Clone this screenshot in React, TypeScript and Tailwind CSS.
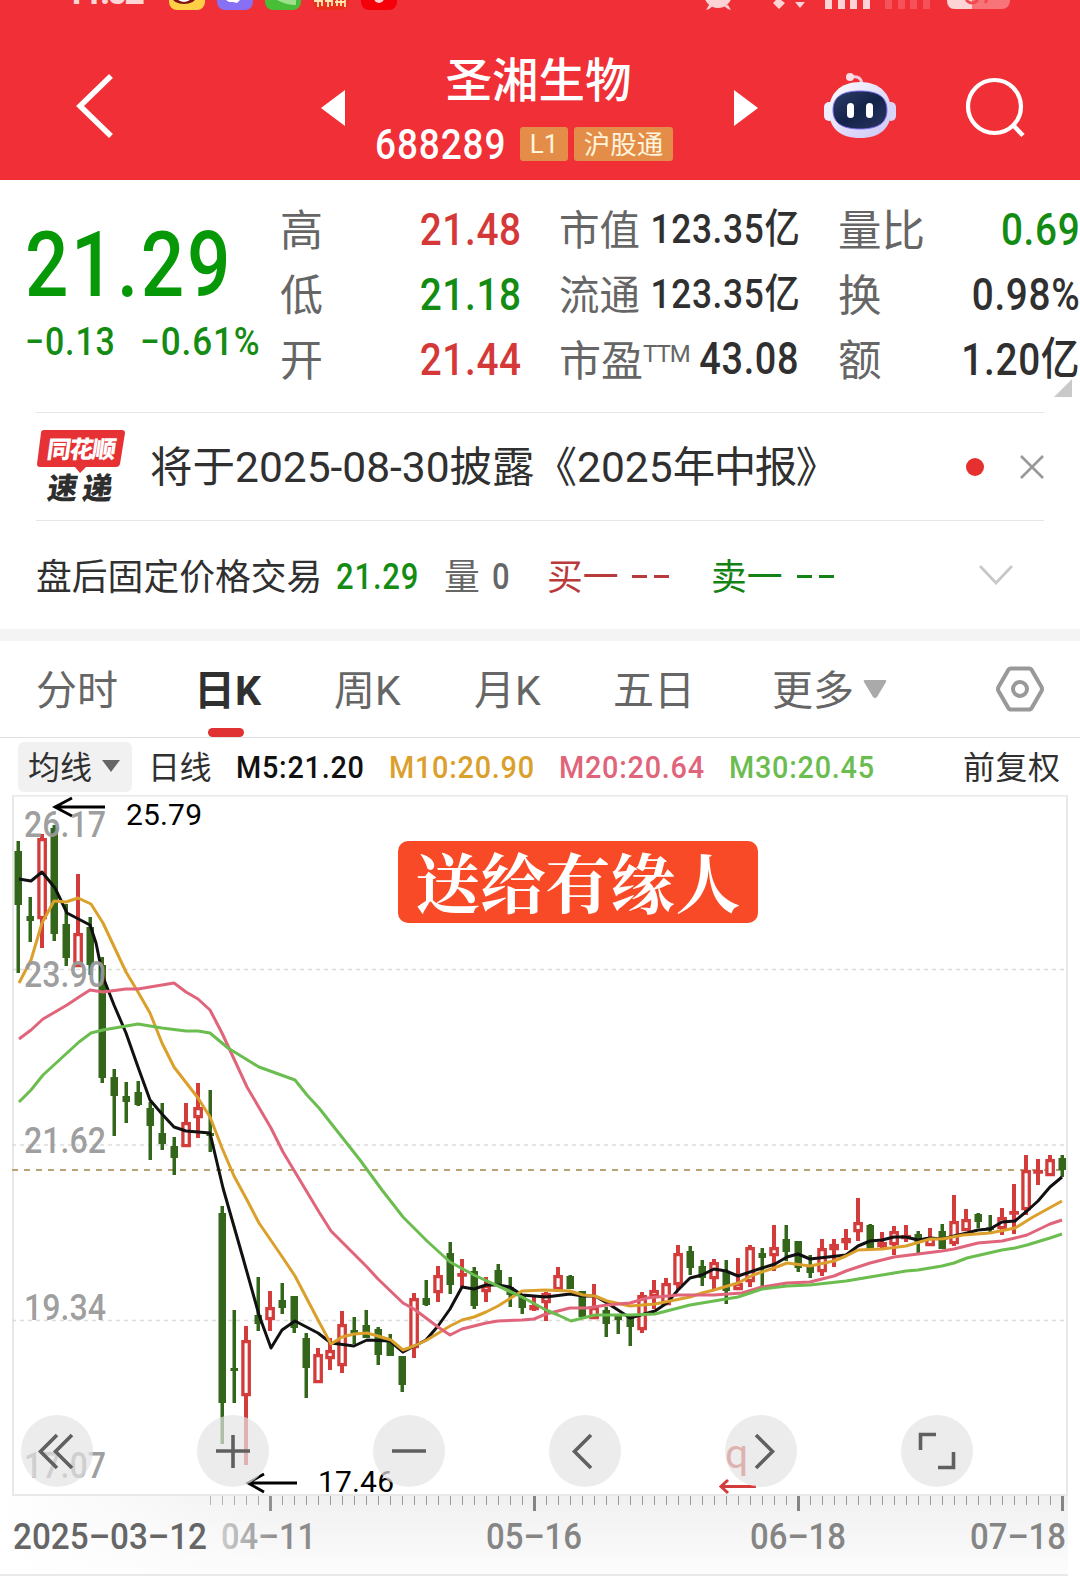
import { useState } from 'react';
import type { ReactNode } from 'react';

const UP = '#d43c3c';
const DOWN = '#33661a';

// [direction, high, body top, body bottom, low]
type Candle = ['u' | 'd', number, number, number, number];

const CANDLES: Candle[] = [
  ['d', 841, 851, 905, 973],
  ['d', 897, 916, 921, 942],
  ['u', 834, 838, 919, 948],
  ['d', 825, 828, 934, 941],
  ['d', 904, 924, 958, 966],
  ['u', 874, 933, 967, 967],
  ['d', 917, 927, 965, 975],
  ['d', 957, 965, 1078, 1083],
  ['d', 1069, 1077, 1096, 1136],
  ['d', 1082, 1096, 1102, 1123],
  ['d', 1081, 1092, 1105, 1106],
  ['d', 1102, 1108, 1126, 1160],
  ['d', 1103, 1133, 1144, 1150],
  ['d', 1137, 1146, 1158, 1175],
  ['u', 1103, 1122, 1147, 1147],
  ['u', 1083, 1107, 1118, 1138],
  ['d', 1090, 1133, 1136, 1152],
  ['d', 1206, 1213, 1403, 1444],
  ['d', 1310, 1368, 1371, 1403],
  ['u', 1326, 1340, 1396, 1465],
  ['d', 1277, 1315, 1324, 1331],
  ['u', 1291, 1307, 1320, 1331],
  ['d', 1283, 1300, 1308, 1314],
  ['d', 1296, 1296, 1328, 1333],
  ['d', 1333, 1338, 1368, 1398],
  ['u', 1348, 1354, 1383, 1383],
  ['u', 1338, 1350, 1359, 1370],
  ['u', 1311, 1324, 1366, 1373],
  ['d', 1317, 1330, 1333, 1344],
  ['d', 1310, 1325, 1338, 1338],
  ['d', 1327, 1329, 1355, 1365],
  ['d', 1334, 1342, 1356, 1356],
  ['d', 1356, 1356, 1385, 1392],
  ['u', 1293, 1298, 1348, 1358],
  ['d', 1280, 1298, 1305, 1306],
  ['u', 1266, 1275, 1293, 1302],
  ['d', 1242, 1253, 1285, 1294],
  ['u', 1259, 1273, 1276, 1287],
  ['d', 1267, 1271, 1306, 1309],
  ['u', 1277, 1285, 1292, 1302],
  ['d', 1264, 1270, 1286, 1286],
  ['d', 1277, 1287, 1295, 1307],
  ['d', 1294, 1296, 1308, 1314],
  ['u', 1296, 1305, 1310, 1311],
  ['u', 1292, 1293, 1303, 1321],
  ['u', 1267, 1275, 1290, 1292],
  ['d', 1275, 1276, 1289, 1289],
  ['d', 1291, 1291, 1317, 1317],
  ['u', 1284, 1307, 1319, 1319],
  ['d', 1307, 1310, 1324, 1337],
  ['d', 1314, 1316, 1320, 1334],
  ['d', 1315, 1317, 1327, 1346],
  ['u', 1292, 1295, 1330, 1333],
  ['u', 1280, 1290, 1297, 1309],
  ['u', 1278, 1283, 1305, 1305],
  ['u', 1245, 1253, 1285, 1290],
  ['d', 1246, 1251, 1268, 1275],
  ['d', 1260, 1266, 1278, 1286],
  ['u', 1259, 1262, 1279, 1289],
  ['d', 1260, 1271, 1291, 1304],
  ['u', 1258, 1283, 1290, 1290],
  ['u', 1245, 1247, 1282, 1287],
  ['d', 1248, 1253, 1258, 1287],
  ['u', 1225, 1247, 1256, 1271],
  ['d', 1225, 1239, 1252, 1261],
  ['d', 1241, 1241, 1268, 1272],
  ['d', 1255, 1266, 1273, 1278],
  ['u', 1239, 1248, 1272, 1276],
  ['u', 1239, 1244, 1250, 1267],
  ['u', 1229, 1238, 1243, 1250],
  ['u', 1198, 1222, 1232, 1241],
  ['d', 1224, 1225, 1249, 1249],
  ['u', 1232, 1242, 1247, 1248],
  ['u', 1226, 1231, 1245, 1255],
  ['u', 1225, 1235, 1239, 1242],
  ['d', 1231, 1234, 1242, 1253],
  ['u', 1228, 1237, 1246, 1246],
  ['d', 1224, 1231, 1249, 1249],
  ['u', 1195, 1221, 1244, 1246],
  ['u', 1209, 1219, 1231, 1231],
  ['d', 1213, 1214, 1222, 1228],
  ['d', 1215, 1227, 1230, 1232],
  ['u', 1208, 1217, 1229, 1235],
  ['u', 1184, 1211, 1214, 1234],
  ['u', 1155, 1170, 1210, 1215],
  ['u', 1159, 1170, 1173, 1185],
  ['u', 1155, 1159, 1176, 1176],
  ['d', 1155, 1158, 1170, 1177],
];

const MA_LINES = [
  {
    color: '#111111',
    points:
      '19,879 31,881 42,872 55,888 67,913 90,925 96,943 103,977 114,1005 126,1033 138,1067 150,1100 162,1114 174,1127 186,1131 210,1133 223,1188 243,1258 259,1315 271,1348 282,1330 295,1321 318,1333 331,1343 354,1346 367,1340 390,1341 403,1352 426,1340 438,1326 450,1309 462,1287 474,1289 486,1285 498,1285 510,1287 522,1295 546,1297 570,1294 583,1296 595,1296 607,1303 618,1310 630,1318 655,1311 667,1303 678,1290 690,1278 702,1275 714,1269 726,1271 738,1276 762,1268 775,1264 787,1257 798,1254 810,1259 846,1255 858,1246 870,1241 882,1240 894,1237 906,1237 918,1240 930,1238 942,1239 954,1236 967,1233 978,1230 990,1229 1002,1222 1015,1221 1027,1211 1038,1201 1050,1187 1062,1177',
  },
  {
    color: '#dba02c',
    points:
      '19,983 31,960 42,923 54,901 66,902 78,898 91,904 103,923 126,972 138,992 150,1013 162,1043 174,1067 198,1098 210,1117 222,1148 234,1176 247,1200 259,1223 283,1258 295,1276 318,1320 331,1344 342,1337 354,1334 367,1333 378,1336 391,1340 403,1350 414,1346 427,1340 450,1326 462,1320 474,1317 486,1312 498,1306 522,1291 545,1290 570,1291 583,1295 595,1296 607,1301 630,1306 655,1304 690,1297 702,1293 714,1290 738,1283 753,1275 774,1268 787,1263 810,1266 834,1261 846,1256 858,1250 882,1249 906,1246 930,1239 942,1239 963,1235 990,1233 1015,1228 1033,1217 1062,1201',
  },
  {
    color: '#e0647a',
    points:
      '19,1039 31,1030 43,1019 67,1005 79,997 90,990 103,992 126,989 138,989 174,983 186,992 198,999 210,1010 222,1033 247,1087 271,1128 283,1152 319,1212 331,1231 367,1267 378,1279 403,1303 414,1309 438,1327 450,1335 462,1329 486,1323 498,1321 522,1320 534,1319 546,1314 570,1308 587,1308 607,1305 630,1303 647,1298 678,1295 714,1295 742,1293 762,1287 787,1283 810,1282 834,1276 846,1271 870,1263 894,1257 918,1254 942,1251 954,1249 978,1243 1002,1241 1015,1238 1027,1235 1050,1224 1062,1220',
  },
  {
    color: '#6cbd50',
    points:
      '19,1102 31,1090 43,1075 67,1053 79,1042 91,1033 103,1030 138,1024 162,1028 186,1031 198,1031 210,1033 228,1048 259,1067 295,1080 307,1095 319,1108 360,1160 382,1190 403,1217 427,1241 450,1262 474,1275 522,1297 546,1310 558,1315 571,1321 595,1315 630,1315 655,1314 690,1305 714,1301 738,1297 762,1289 787,1286 810,1285 846,1281 906,1271 918,1270 942,1266 954,1263 967,1258 1002,1250 1015,1248 1027,1245 1050,1238 1062,1234',
  },
];

const PRICE_LABELS = [
  { text: '26.17', y: 837 },
  { text: '23.90', y: 987 },
  { text: '21.62', y: 1153 },
  { text: '19.34', y: 1320 },
  { text: '17.07', y: 1478 },
];

const DATES = [
  { text: '2025–03–12', x: 13, w: 194, fill: '#666666' },
  { text: '04–11', x: 221, w: 95, fill: 'url(#dateFade)' },
  { text: '05–16', x: 486, w: 96, fill: '#858585' },
  { text: '06–18', x: 750, w: 96, fill: '#858585' },
  { text: '07–18', x: 970, w: 96, fill: '#858585' },
];

const TICKS = Array.from({ length: 72 }, (_, i) => 210 + i * 12);

function StatusBar() {
  return (
    <svg width="1080" height="12" viewBox="0 0 1080 12" className="block">
      <text
        x="65"
        y="4"
        fontSize="36"
        fontWeight="700"
        fill="#fff"
        opacity="0.8"
        textLength="80"
      >
        11:02
      </text>
      <rect x="169" y="-26" width="36" height="36" rx="8" fill="#ffcf45" />
      <ellipse cx="184" cy="-3" rx="12" ry="7" fill="#7c1212" />
      <ellipse cx="184" cy="-3" rx="7" ry="5" fill="#fff" />
      <rect x="217" y="-26" width="36" height="36" rx="8" fill="#8870f5" />
      <path d="M226 0h8v2h-5zM232 0h8l-3 3-4-1z" fill="#fff" />
      <rect x="265" y="-26" width="36" height="36" rx="8" fill="#47bd38" />
      <path d="M277 0h19v5q-10 0-19-5z" fill="#9fe08f" />
      <rect x="313" y="-26" width="36" height="36" rx="8" fill="#e8301c" />
      <path
        d="M314 1h8M318 0v7M322 0v6M325 1h7M328 0v7M332 0v6M335 2h10M337 0v6M341 0v6M345 0v7"
        stroke="#ffe6b0"
        strokeWidth="1.800"
      />
      <rect x="361" y="-26" width="36" height="36" rx="8" fill="#f50008" />
      <circle cx="379" cy="-2" r="5" fill="#ffd0d0" />
      <g fill="#fdd3d6">
        <circle cx="718" cy="-6" r="14" />
        <path d="M709 5l-3 5 3-1 4-3zM728 5l3 5-3-1-4-3z" />
        <path d="M773 3l3-3h5l4 3-6 6zM795 2h10l-5 6z" />
        <path d="M825 0h7v9h-7zM838 0h7v9h-7zM850 0h7v9h-7zM863 0h7v9h-7z" />
      </g>
      <path
        d="M885 0h7v9h-7zM898 0h7v9h-7zM910 0h7v9h-7zM923 0h7v9h-7z"
        fill="#f5525a"
      />
      <rect x="947" y="-20" width="63" height="29" rx="8" fill="#f87478" />
      <path d="M947 0h25v9h-17q-8 0-8-9z" fill="#fdd3d6" />
      <path d="M966 0q6 6 12 0M985 3l2-3" stroke="#ee4a50" strokeWidth="3" fill="none" />
    </svg>
  );
}

function Robot() {
  return (
    <svg width="72" height="68" viewBox="0 0 72 68">
      <defs>
        <linearGradient id="shell" x1="0" y1="0" x2="1" y2="1">
          <stop offset="0" stopColor="#fff" />
          <stop offset="0.55" stopColor="#e0dcfa" />
          <stop offset="1" stopColor="#cdc6f4" />
        </linearGradient>
        <linearGradient id="visor" x1="0" y1="0" x2="1" y2="1">
          <stop offset="0" stopColor="#2e3d66" />
          <stop offset="0.5" stopColor="#14234a" />
          <stop offset="1" stopColor="#2b3560" />
        </linearGradient>
      </defs>
      <path d="M27 5q10-2 11 7" stroke="#f3c9da" strokeWidth="3" fill="none" />
      <circle cx="26" cy="5" r="4" fill="#fbdde6" />
      <rect x="0" y="30" width="10" height="19" rx="5" fill="#eef0ff" />
      <rect x="62" y="30" width="10" height="19" rx="5" fill="#d8d4f8" />
      <path
        d="M36 10C56 10 67 22 67 39S56 66 36 66 5 56 5 39 16 10 36 10z"
        fill="url(#shell)"
      />
      <path
        d="M36 19c18 0 27 6 27 19s-9 19-27 19S9 51 9 38s9-19 27-19z"
        fill="url(#visor)"
        stroke="#7a6ff0"
        strokeWidth="1"
      />
      <rect x="23" y="31" width="7" height="15" rx="3.500" fill="#fff" />
      <rect x="42" y="31" width="7" height="15" rx="3.500" fill="#fff" />
    </svg>
  );
}

function Header() {
  return (
    <header className="h-[180px] bg-[#f02f37] text-white">
      <StatusBar />
      <div className="flex h-[168px] items-start">
        <svg className="mt-[60px] ml-[75px] shrink-0" width="42" height="68" viewBox="0 0 42 68">
          <path d="M36 4 5 34 36 64" stroke="#fff" strokeWidth="5.500" fill="none" />
        </svg>
        <svg className="mt-[78px] ml-[204px] shrink-0" width="24" height="36" viewBox="0 0 24 36">
          <path d="M24 0v36L0 18z" fill="#fff" />
        </svg>
        <div className="ml-[30px] w-[298px] shrink-0">
          <h1 className="mt-[42px] pl-[29px] text-center text-[46.500px] leading-[54px] font-medium">
            圣湘生物
          </h1>
          <div className="mt-[19px] flex h-[34px] items-center">
            <span className="w-[145px] shrink-0 origin-left scale-x-[0.88] pt-[2px] text-[42px] leading-[34px] font-medium tracking-[1px]">
              688289
            </span>
            <span className="h-[34px] w-[48px] rounded-[3px] bg-[#e48d48] text-center text-[26px] leading-[34px] text-[#fff4dc]">
              L1
            </span>
            <span className="ml-[6px] h-[34px] w-[99px] rounded-[3px] bg-[#e48d48] text-center text-[26.500px] leading-[36px] text-[#fff4dc]">
              沪股通
            </span>
          </div>
        </div>
        <svg className="mt-[78px] ml-[61px] shrink-0" width="24" height="36" viewBox="0 0 24 36">
          <path d="M0 0v36l24-18z" fill="#fff" />
        </svg>
        <div className="mt-[60px] ml-[66px] shrink-0">
          <Robot />
        </div>
        <svg className="mt-[65px] ml-[69px] shrink-0" width="62" height="62" viewBox="0 0 62 62">
          <circle cx="29.500" cy="29.500" r="26.500" stroke="#fff" strokeWidth="4.200" fill="none" />
          <path d="M48 48 58 58.500" stroke="#fff" strokeWidth="4.500" />
        </svg>
      </div>
    </header>
  );
}

function Stat({
  label,
  children,
  className,
}: {
  label: ReactNode;
  children: ReactNode;
  className: string;
}) {
  return (
    <div className="flex h-[65px] justify-between leading-[65px] whitespace-nowrap">
      <span className="pt-[2px] text-[#666]">{label}</span>
      <span
        className={`origin-right scale-x-[0.86] font-medium tracking-[0.800px] ${className}`}
      >
        {children}
      </span>
    </div>
  );
}

function Quote() {
  return (
    <section className="relative flex h-[232px] pt-[17px] text-[#303030]">
      <div className="w-[280px] shrink-0 pt-[24px] pl-[25px] text-[#069806]">
        <div className="origin-left scale-x-[0.85] text-[90px] leading-[90px] font-medium tracking-[3px]">
          21.29
        </div>
        <div className="mt-[12px] flex text-[39px] leading-[39px] font-medium tracking-[1px] text-[#148c14]">
          <span className="w-[115px] origin-left scale-x-[0.87]">−0.13</span>
          <span className="origin-left scale-x-[0.9]">−0.61%</span>
        </div>
      </div>
      <div className="w-[242px] shrink-0 text-[43px]">
        <Stat label="高" className="text-[45px] text-[#d43838]">21.48</Stat>
        <Stat label="低" className="text-[45px] text-[#148c14]">21.18</Stat>
        <Stat label="开" className="text-[45px] text-[#d43838]">21.44</Stat>
      </div>
      <div className="ml-[37px] w-[243px] shrink-0 text-[40.500px]">
        <Stat label="市值" className="-translate-x-[14px] text-[41px]">123.35亿</Stat>
        <Stat label="流通" className="-translate-x-[14px] text-[41px]">123.35亿</Stat>
        <Stat
          label={
            <span className="text-[42px]">
              市盈
              <span className="inline-block -translate-y-[14px] text-[24px] leading-none tracking-[-1px]">
                TTM
              </span>
            </span>
          }
          className="-translate-x-[7px] text-[44px]"
        >
          43.08
        </Stat>
      </div>
      <div className="ml-[36px] w-[242px] shrink-0 text-[43.500px]">
        <Stat label="量比" className="text-[45px] text-[#148c14]">0.69</Stat>
        <Stat label="换" className="text-[45px]">0.98%</Stat>
        <Stat label="额" className="text-[45px]">1.20亿</Stat>
      </div>
      <svg className="absolute top-[199px] right-[8px]" width="18" height="18" viewBox="0 0 18 18">
        <path d="M18 0v18H0z" fill="#c9c9c9" />
      </svg>
    </section>
  );
}

function News() {
  return (
    <section className="mx-9 flex h-[108px] items-center border-t border-[#e6e6e6]">
      <svg width="90" height="76" viewBox="0 0 90 76" className="shrink-0 overflow-visible">
        <path
          d="M8 1h78q3 0 3 3l-5 31q-1 3-4 3H50l-6 6-5-6H4q-3 0-3-3L5 4q0-3 3-3z"
          fill="#e63234"
        />
        <g transform="skewX(-8)" fontWeight="900">
          <text x="14" y="29" fontSize="24" fill="#fff" textLength="69">
            同花顺
          </text>
          <text x="20" y="70" fontSize="30" fill="#2e2e2e" textLength="65">
            速递
          </text>
        </g>
      </svg>
      <div className="ml-[24px] w-[780px] shrink-0 pt-[3px] text-[42.500px] leading-[60px] whitespace-nowrap text-[#303030]">
        将于2025-08-30披露《2025<span className="tracking-[-1.500px]">年中报》</span>
      </div>
      <span className="ml-[36px] size-[18px] shrink-0 rounded-full bg-[#e63030]" />
      <svg className="ml-[36px] shrink-0" width="24" height="24" viewBox="0 0 24 24">
        <path d="M1 1l22 22M23 1 1 23" stroke="#999" strokeWidth="2.600" />
      </svg>
    </section>
  );
}

function AfterHours() {
  return (
    <section className="mx-9 flex h-[109px] items-center border-t border-[#e6e6e6] pt-[3px] text-[35.800px] leading-[50px] whitespace-nowrap">
      <span className="w-[300px] pt-[2px] text-[#303030]">盘后固定价格交易</span>
      <span className="w-[108px] origin-left scale-x-[0.86] text-[36px] font-medium tracking-[1px] text-[#148c14]">
        21.29
      </span>
      <span className="w-[48px] pt-[2px] text-[#666]">量</span>
      <span className="w-[55px] origin-left scale-x-[0.86] text-[36px] font-medium text-[#666]">0</span>
      <span className="w-[85px] pt-[2px] text-[#b83a3a]">买一</span>
      <span className="flex w-[79px] gap-[7px]">
        <i className="h-[3px] w-[15px] bg-[#b83a3a]" />
        <i className="h-[3px] w-[15px] bg-[#b83a3a]" />
      </span>
      <span className="w-[86px] pt-[2px] text-[#148214]">卖一</span>
      <span className="flex gap-[7px]">
        <i className="h-[3px] w-[15px] bg-[#148214]" />
        <i className="h-[3px] w-[15px] bg-[#148214]" />
      </span>
      <svg className="mr-[31px] mb-[3px] ml-auto" width="34" height="20" viewBox="0 0 34 20">
        <path d="M1 1l16 17L33 1" stroke="#c8c8c8" strokeWidth="2.800" fill="none" />
      </svg>
    </section>
  );
}

const TABS = [
  { name: '分时', width: 'w-[158px]' },
  { name: '日K', width: 'w-[140px]' },
  { name: '周K', width: 'w-[140px]' },
  { name: '月K', width: 'w-[139px]' },
  { name: '五日', width: 'w-[159px]' },
];

function Tabs() {
  const [active, setActive] = useState('日K');

  return (
    <nav className="flex h-[97px] items-center border-b border-[#e0e0e0] pr-9 pl-9 text-[41px] leading-[60px] whitespace-nowrap text-[#666]">
      {TABS.map((tab) => (
        <div key={tab.name} className={`flex h-full shrink-0 ${tab.width}`}>
          <button
            type="button"
            onClick={() => setActive(tab.name)}
            className={`relative h-full pt-[4px] ${active === tab.name ? 'font-bold text-[#303030]' : ''}`}
          >
            {tab.name}
            {active === tab.name && (
              <span className="absolute bottom-0 left-[14px] h-[9px] w-[36px] rounded-full bg-[#e03232]" />
            )}
          </button>
        </div>
      ))}
      <span className="pt-[4px]">更多</span>
      <svg className="ml-[9px]" width="24" height="20" viewBox="0 0 24 20">
        <path d="M2 1h20q2 0 1 2L14 18q-2 2-4 0L1 3Q0 1 2 1z" fill="#aaa" />
      </svg>
      <svg className="ml-auto" width="48" height="48" viewBox="0 0 48 48">
        <path
          d="M15 3.500h18q2 0 3 2L45.500 22q1 2 0 4L36 42.500q-1 2-3 2H15q-2 0-3-2L2.500 26q-1-2 0-4L12 5.500q1-2 3-2z"
          stroke="#999"
          strokeWidth="4"
          fill="none"
        />
        <circle cx="24" cy="24" r="7" stroke="#999" strokeWidth="4" fill="none" />
      </svg>
    </nav>
  );
}

function Averages() {
  return (
    <div className="flex h-[57px] items-center pl-[18px] text-[32px] leading-[50px] whitespace-nowrap text-[#303030]">
      <button
        type="button"
        className="mr-[16px] flex h-[50px] w-[114px] shrink-0 items-center rounded-[6px] bg-[#f1f1f1] pt-[2px] pl-[10px]"
      >
        均线
        <svg className="mb-[3px] ml-[10px]" width="18" height="12" viewBox="0 0 18 12">
          <path d="M0 0h18L9 12z" fill="#666" />
        </svg>
      </button>
      <span className="w-[88px] shrink-0 pt-[2px] tracking-[-0.500px]">日线</span>
      <span className="w-[153px] shrink-0 origin-left scale-x-[0.9] pt-px font-medium tracking-[0.850px] text-[#111]">M5:21.20</span>
      <span className="w-[170px] shrink-0 origin-left scale-x-[0.9] pt-px font-medium tracking-[0.850px] text-[#dba02c]">M10:20.90</span>
      <span className="w-[170px] shrink-0 origin-left scale-x-[0.9] pt-px font-medium tracking-[0.850px] text-[#e0647a]">M20:20.64</span>
      <span className="w-[234px] shrink-0 origin-left scale-x-[0.9] pt-px font-medium tracking-[0.850px] text-[#6cbd50]">M30:20.45</span>
      <span className="shrink-0 pt-[3px] tracking-[0.500px]">前复权</span>
    </div>
  );
}

function CandleMark({ candle, x }: { candle: Candle; x: number }) {
  const [dir, high, top, bottom, low] = candle;
  if (dir === 'd') {
    return (
      <g fill={DOWN}>
        <rect x={x - 1.5} y={high} width="3.500" height={low - high} />
        <rect x={x - 3.5} y={top} width="7.500" height={Math.max(bottom - top, 3)} />
      </g>
    );
  }
  return (
    <g fill={UP}>
      <rect x={x - 2} y={high} width="4" height={top - high + 1} />
      <rect x={x - 2} y={bottom - 1} width="4" height={low - bottom + 1} />
      <rect
        x={x - 3.1}
        y={top + 1.6}
        width="6.400"
        height={Math.max(bottom - top - 3, 0.5)}
        fill="#fff"
        stroke={UP}
        strokeWidth="3.300"
      />
    </g>
  );
}

const CONTROLS: ReactNode[] = [
  <path key="first" d="M36 20 19.500 36.500 36 53M51 20 34.500 36.500 51 53" />,
  <path key="in" d="M19 36h34M36 20v33" />,
  <path key="out" d="M19 36h34" />,
  <path key="prev" d="M42 20 25.500 36.500 42 53" />,
  <path key="next" d="M31 20l16.500 16.500L31 53" />,
  <path key="full" d="M35 19.500H19.500V35M37 52.500h15.500V37" />,
];

function Chart() {
  return (
    <section className="relative h-[701px]">
      <svg width="1080" height="701" viewBox="0 795 1080 701" className="block">
        <rect x="13" y="795.500" width="1054" height="699.500" fill="none" stroke="#e8e8e8" strokeWidth="2" />
        {[969.5, 1145, 1320.5].map((y) => (
          <path key={y} d={`M12 ${y}H1067`} stroke="#dcdcdc" strokeWidth="1.300" strokeDasharray="4 4" />
        ))}
        <path d="M12 1170H1067" stroke="#b9a273" strokeWidth="1.800" strokeDasharray="6 6" />
        {CANDLES.map((c, i) => (
          <CandleMark key={i} candle={c} x={18 + i * 12} />
        ))}
        {MA_LINES.map((line) => (
          <polyline
            key={line.color}
            points={line.points}
            fill="none"
            stroke={line.color}
            strokeWidth="3"
            strokeLinejoin="round"
          />
        ))}
        <g fontSize="36" fill="#999" fontWeight="500" fillOpacity="0.95">
          {PRICE_LABELS.map((p) => (
            <text key={p.text} x="24" y={p.y} textLength="82" lengthAdjust="spacingAndGlyphs">
              {p.text}
            </text>
          ))}
        </g>
        <g stroke="#000" strokeWidth="2.800" fill="none">
          <path d="M105 807H55M72 798 55 807l17 9" />
          <path d="M297 1483h-49M264 1474l-16 9 16 9" />
        </g>
        <g fontSize="30" fill="#000">
          <text x="126" y="825" textLength="76">25.79</text>
          <text x="318" y="1492" textLength="76">17.46</text>
        </g>
        <text x="725" y="1468" fontSize="41" fill="#d43c3c">q</text>
        <path d="M756 1486.500h-34M728 1480l-7 6.500 7 6.500" stroke="#d43c3c" strokeWidth="3" fill="none" />
      </svg>
      <div className="absolute top-[46px] left-[398px] h-[82px] w-[360px] rounded-[10px] bg-[#f84a26] text-center font-['Noto_Serif_CJK_SC','Noto_Sans_CJK_SC',serif] text-[65px] leading-[79px] font-bold text-white">
        送给有缘人
      </div>
      <div className="absolute top-[620px] left-[21px] flex gap-[104px]">
        {CONTROLS.map((icon, i) => (
          <button
            key={i}
            type="button"
            className="size-[72px] rounded-full bg-[#e4e4e4]/70"
          >
            <svg width="72" height="72" viewBox="0 0 72 72" fill="none" stroke="#606060" strokeWidth="3.600">
              {icon}
            </svg>
          </button>
        ))}
      </div>
    </section>
  );
}

function DateAxis() {
  return (
    <div className="h-[80px] w-[1068px] border-b-2 border-[#e9e9e9] bg-linear-to-b from-[#f0f0f0] to-[#fcfcfc]">
      <svg width="1068" height="78" viewBox="0 1496 1068 78" className="block overflow-visible">
        <defs>
          <linearGradient id="dateFade">
            <stop offset="0" stopColor="#cccccc" />
            <stop offset="0.6" stopColor="#8c8c8c" />
          </linearGradient>
          <linearGradient id="leftFade">
            <stop offset="0" stopColor="#fff" />
            <stop offset="1" stopColor="#fff" stopOpacity="0" />
          </linearGradient>
        </defs>
        {TICKS.map((x, i) =>
          i % 22 === 5 ? (
            <path key={x} d={`M${x + 0.5} 1496v15`} stroke="#858585" strokeWidth="3" />
          ) : (
            <path key={x} d={`M${x + 0.5} 1496v9`} stroke="#999" strokeWidth="1" />
          ),
        )}
        <rect x="0" y="1496" width="300" height="78" fill="url(#leftFade)" />
        <g fontSize="36" fontWeight="500">
          {DATES.map((d) => (
            <text
              key={d.text}
              x={d.x}
              y="1549"
              fill={d.fill}
              textLength={d.w}
              lengthAdjust="spacingAndGlyphs"
            >
              {d.text}
            </text>
          ))}
        </g>
      </svg>
    </div>
  );
}

export default function App() {
  return (
    <main className="h-[1576px] w-[1080px] overflow-hidden bg-white font-['Roboto','Noto_Sans_CJK_SC',sans-serif]">
      <Header />
      <Quote />
      <News />
      <AfterHours />
      <div className="h-[12px] bg-[#f4f4f4]" />
      <Tabs />
      <Averages />
      <Chart />
      <DateAxis />
    </main>
  );
}
